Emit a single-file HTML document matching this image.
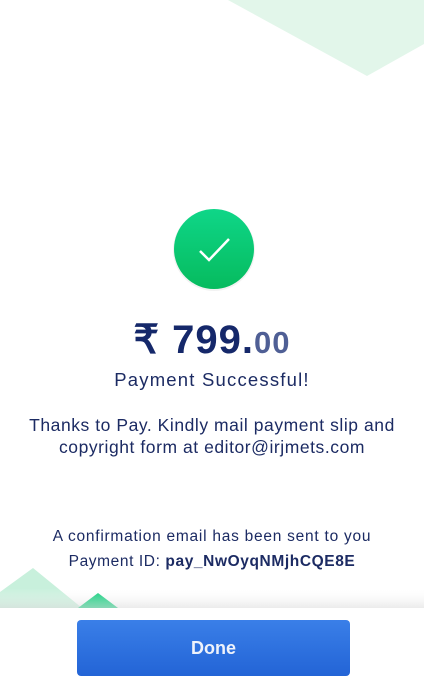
<!DOCTYPE html>
<html><head><style>
body{margin:0;width:424px;height:684px;overflow:hidden;background:#fff;font-family:"Liberation Sans",sans-serif;position:relative;color:#1c2b63}
.c{position:absolute;left:0;width:424px;text-align:center;white-space:nowrap}
</style></head><body>
<svg style="position:absolute;left:0;top:0" width="424" height="684">
<polygon points="228,0 424,0 424,44 367,76" fill="#e2f6ea"/>
<polygon points="0,592 33,568 82,608 0,608" fill="#c8f0dc"/>
<polygon points="78,608 98,593 118,608" fill="#08cc78"/>
<defs><linearGradient id="g" x1="0" y1="0" x2="0" y2="1"><stop offset="0" stop-color="#0fd688"/><stop offset="1" stop-color="#06bb5e"/></linearGradient>
<linearGradient id="b" x1="0" y1="0" x2="0" y2="1"><stop offset="0" stop-color="#3a7fe8"/><stop offset="1" stop-color="#2364d6"/></linearGradient>
<linearGradient id="s" x1="0" y1="0" x2="0" y2="1"><stop offset="0" stop-color="#fff" stop-opacity="0"/><stop offset="1" stop-color="#ddd"/></linearGradient></defs>
<rect x="0" y="588" width="424" height="20" fill="url(#s)" opacity="0.6"/>
<circle cx="214" cy="250" r="41" fill="#000" opacity="0.05"/>
<circle cx="214" cy="249" r="40" fill="url(#g)"/>
<polyline points="200,251 209,260 229,239" fill="none" stroke="#fff" stroke-width="2.5"/>
<rect x="0" y="608" width="424" height="76" fill="#fff"/>
<rect x="77" y="620" width="273" height="56" rx="4" fill="url(#b)"/>
</svg>
<div class="c" style="top:317px;font-size:40px;font-weight:bold;color:#15286a;letter-spacing:1px">₹ 799.<span style="font-size:31px;color:#4f5f95">00</span></div>
<div class="c" style="top:369px;font-size:18.5px;letter-spacing:1.2px">Payment Successful!</div>
<div class="c" style="top:414px;font-size:17.5px;line-height:22px;letter-spacing:0.55px">Thanks to Pay. Kindly mail payment slip and<br>copyright form at editor@irjmets.com</div>
<div class="c" style="top:528px;font-size:15.5px;letter-spacing:0.75px">A confirmation email has been sent to you</div>
<div class="c" style="top:553px;font-size:15.5px;letter-spacing:0.6px">Payment ID: <b>pay_NwOyqNMjhCQE8E</b></div>
<div class="c" style="top:638px;left:77px;width:273px;font-size:18px;font-weight:bold;color:#eef2fb">Done</div>
</body></html>
